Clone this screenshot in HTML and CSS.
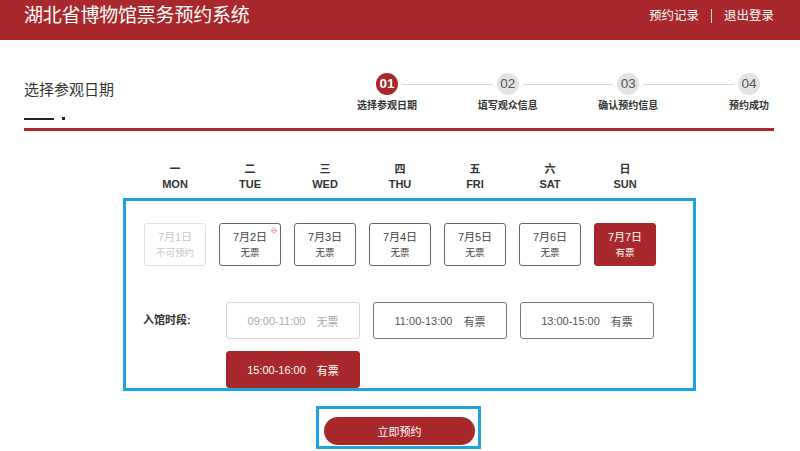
FILE: index.html
```html
<!DOCTYPE html>
<html lang="zh-CN">
<head>
<meta charset="utf-8">
<title>湖北省博物馆票务预约系统</title>
<link rel="stylesheet" href="styles.css">
</head>
<body>
<header class="topbar">
  <div class="brand">湖北省博物馆票务预约系统</div>
  <nav class="toplinks"><a class="toplink">预约记录</a><span class="sep"></span><a class="toplink">退出登录</a></nav>
</header>
<main class="main">
  <section class="page-head">
    <div class="head-left">
      <h1 class="page-title">选择参观日期</h1>
      <div class="title-mark"><span class="dash"></span><span class="dot"></span></div>
    </div>
    <ol class="steps">
      <li class="step active"><span class="num">01</span><span class="label">选择参观日期</span></li>
      <li class="step-line"></li>
      <li class="step"><span class="num">02</span><span class="label">填写观众信息</span></li>
      <li class="step-line"></li>
      <li class="step"><span class="num">03</span><span class="label">确认预约信息</span></li>
      <li class="step-line"></li>
      <li class="step"><span class="num">04</span><span class="label">预约成功</span></li>
    </ol>
  </section>
  <section class="booking">
    <div class="weekdays">
      <div class="wd"><span class="wd-zh">一</span><span class="wd-en">MON</span></div>
      <div class="wd"><span class="wd-zh">二</span><span class="wd-en">TUE</span></div>
      <div class="wd"><span class="wd-zh">三</span><span class="wd-en">WED</span></div>
      <div class="wd"><span class="wd-zh">四</span><span class="wd-en">THU</span></div>
      <div class="wd"><span class="wd-zh">五</span><span class="wd-en">FRI</span></div>
      <div class="wd"><span class="wd-zh">六</span><span class="wd-en">SAT</span></div>
      <div class="wd"><span class="wd-zh">日</span><span class="wd-en">SUN</span></div>
    </div>
    <div class="panel">
      <div class="dates">
        <div class="date disabled"><span class="d-day">7月1日</span><span class="d-status">不可预约</span></div>
        <div class="date"><span class="d-day">7月2日</span><span class="d-status">无票</span>
          <svg class="d-mark" viewBox="0 0 8 7" width="8" height="7"><path d="M4 0.8 L7 3.5 L4 6.2 L1 3.5 Z M1 3.5 H7" fill="none" stroke="#e39aa0" stroke-width="0.9"/></svg>
        </div>
        <div class="date"><span class="d-day">7月3日</span><span class="d-status">无票</span></div>
        <div class="date"><span class="d-day">7月4日</span><span class="d-status">无票</span></div>
        <div class="date"><span class="d-day">7月5日</span><span class="d-status">无票</span></div>
        <div class="date"><span class="d-day">7月6日</span><span class="d-status">无票</span></div>
        <div class="date selected"><span class="d-day">7月7日</span><span class="d-status">有票</span></div>
      </div>
      <div class="slots-row">
        <span class="slots-label">入馆时段:</span>
        <div class="slots">
          <div class="slot disabled"><span>09:00-11:00</span><span>无票</span></div>
          <div class="slot"><span>11:00-13:00</span><span>有票</span></div>
          <div class="slot"><span>13:00-15:00</span><span>有票</span></div>
          <div class="slot selected"><span>15:00-16:00</span><span>有票</span></div>
        </div>
      </div>
    </div>
    <div class="submit-wrap"><button class="submit" type="button">立即预约</button></div>
  </section>
</main>
</body>
</html>
```

FILE: styles.css
```css
* { box-sizing: border-box; }
html, body { margin: 0; padding: 0; background: #fff; }
body {
  font-family: "Liberation Sans", "Noto Sans CJK SC", sans-serif;
  color: #333;
  width: 800px;
  overflow: hidden;
}

.topbar {
  height: 40px;
  background: #a8282b;
  display: flex;
  justify-content: space-between;
  align-items: flex-start;
  padding: 0 26px 0 24px;
  color: #fff;
}
.brand {
  font-size: 19px;
  line-height: 26px;
  padding-top: 3px;
  letter-spacing: -0.2px;
}
.toplinks {
  display: flex;
  align-items: center;
  gap: 12px;
  padding-top: 7px;
}
.toplink {
  font-size: 12.5px;
  line-height: 18px;
  color: #fff;
}
.sep {
  width: 1px;
  height: 14px;
  background: rgba(255,255,255,0.75);
}

.main {
  width: 750px;
  margin-left: 24px;
}
.page-head {
  display: flex;
  justify-content: space-between;
  height: 91px;
  padding-top: 33px;
  border-bottom: 3px solid #a8282b;
}
.head-left { padding-top: 7px; }
.page-title {
  margin: 0;
  font-size: 15px;
  line-height: 20px;
  font-weight: normal;
  color: #333;
}
.title-mark {
  display: flex;
  align-items: center;
  gap: 8px;
  margin-top: 17px;
}
.dash { width: 30px; height: 2px; background: #222; }
.dot { width: 3px; height: 3px; background: #222; }

.steps {
  list-style: none;
  margin: 0 14px 0 0;
  padding: 0;
  display: flex;
  width: 384px;
  align-items: flex-start;
}
.step {
  width: 22px;
  display: flex;
  flex-direction: column;
  align-items: center;
}
.num {
  width: 22px;
  height: 22px;
  border-radius: 50%;
  background: #e3e3e3;
  color: #555;
  font-size: 13.5px;
  line-height: 22px;
  text-align: center;
}
.step.active .num { background: #a8282b; color: #fff; font-weight: bold; }
.label {
  margin-top: 4px;
  font-size: 10px;
  line-height: 14px;
  font-weight: bold;
  white-space: nowrap;
  color: #333;
}
.step-line {
  flex: 1;
  height: 1px;
  background: #d8d8d8;
  margin: 11px 4px 0;
}

.booking { padding-top: 31px; }
.weekdays {
  margin-left: 120px;
  display: grid;
  grid-template-columns: repeat(7, 62px);
  column-gap: 13px;
}
.wd {
  display: flex;
  flex-direction: column;
  align-items: center;
}
.wd-zh { font-size: 11px; line-height: 15px; font-weight: bold; color: #333; }
.wd-en { font-size: 11px; line-height: 15px; font-weight: bold; color: #333; }

.panel {
  margin-top: 6px;
  margin-left: 99px;
  width: 573px;
  border: 3px solid #1ea2e0;
  padding: 22px 0 0 18px;
}
.dates {
  display: grid;
  grid-template-columns: repeat(7, 62px);
  column-gap: 13px;
}
.date {
  position: relative;
  height: 43px;
  border: 1px solid #666;
  border-radius: 3px;
  display: flex;
  flex-direction: column;
  align-items: center;
  justify-content: center;
  color: #444;
}
.d-day { font-size: 11px; line-height: 15px; }
.d-status { font-size: 9.5px; line-height: 13px; margin-top: 1px; }
.date.disabled { border-color: #e2e2e2; color: #c8c8c8; }
.date.selected { background: #a8282b; border-color: #a8282b; color: #fff; }
.d-mark { position: absolute; top: 3px; right: 2px; }

.slots-row {
  margin-top: 36px;
  display: flex;
  align-items: flex-start;
}
.slots-label {
  width: 83px;
  margin-left: -1px;
  font-size: 11px;
  line-height: 37px;
  font-weight: bold;
  color: #333;
}
.slots {
  display: grid;
  grid-template-columns: repeat(3, 134px);
  column-gap: 13px;
  row-gap: 12px;
}
.slot {
  height: 37px;
  border: 1px solid #777;
  border-radius: 3px;
  display: flex;
  align-items: center;
  justify-content: center;
  gap: 11px;
  font-size: 11px;
  color: #555;
}
.slot.disabled { border-color: #d8d8d8; color: #aaa; }
.slot.selected { background: #a8282b; border-color: #a8282b; color: #fff; }

.submit-wrap {
  margin-top: 15px;
  margin-left: 292px;
  width: 165px;
  height: 43px;
  border: 3px solid #1ea2e0;
  padding: 8px 3px 1px 5px;
}
.submit {
  display: block;
  width: 151px;
  height: 28px;
  border: 0;
  border-radius: 14px;
  background: #a8282b;
  color: #fff;
  font-family: "Liberation Sans", "Noto Sans CJK SC", sans-serif;
  font-size: 11px;
  padding: 0;
}
```
